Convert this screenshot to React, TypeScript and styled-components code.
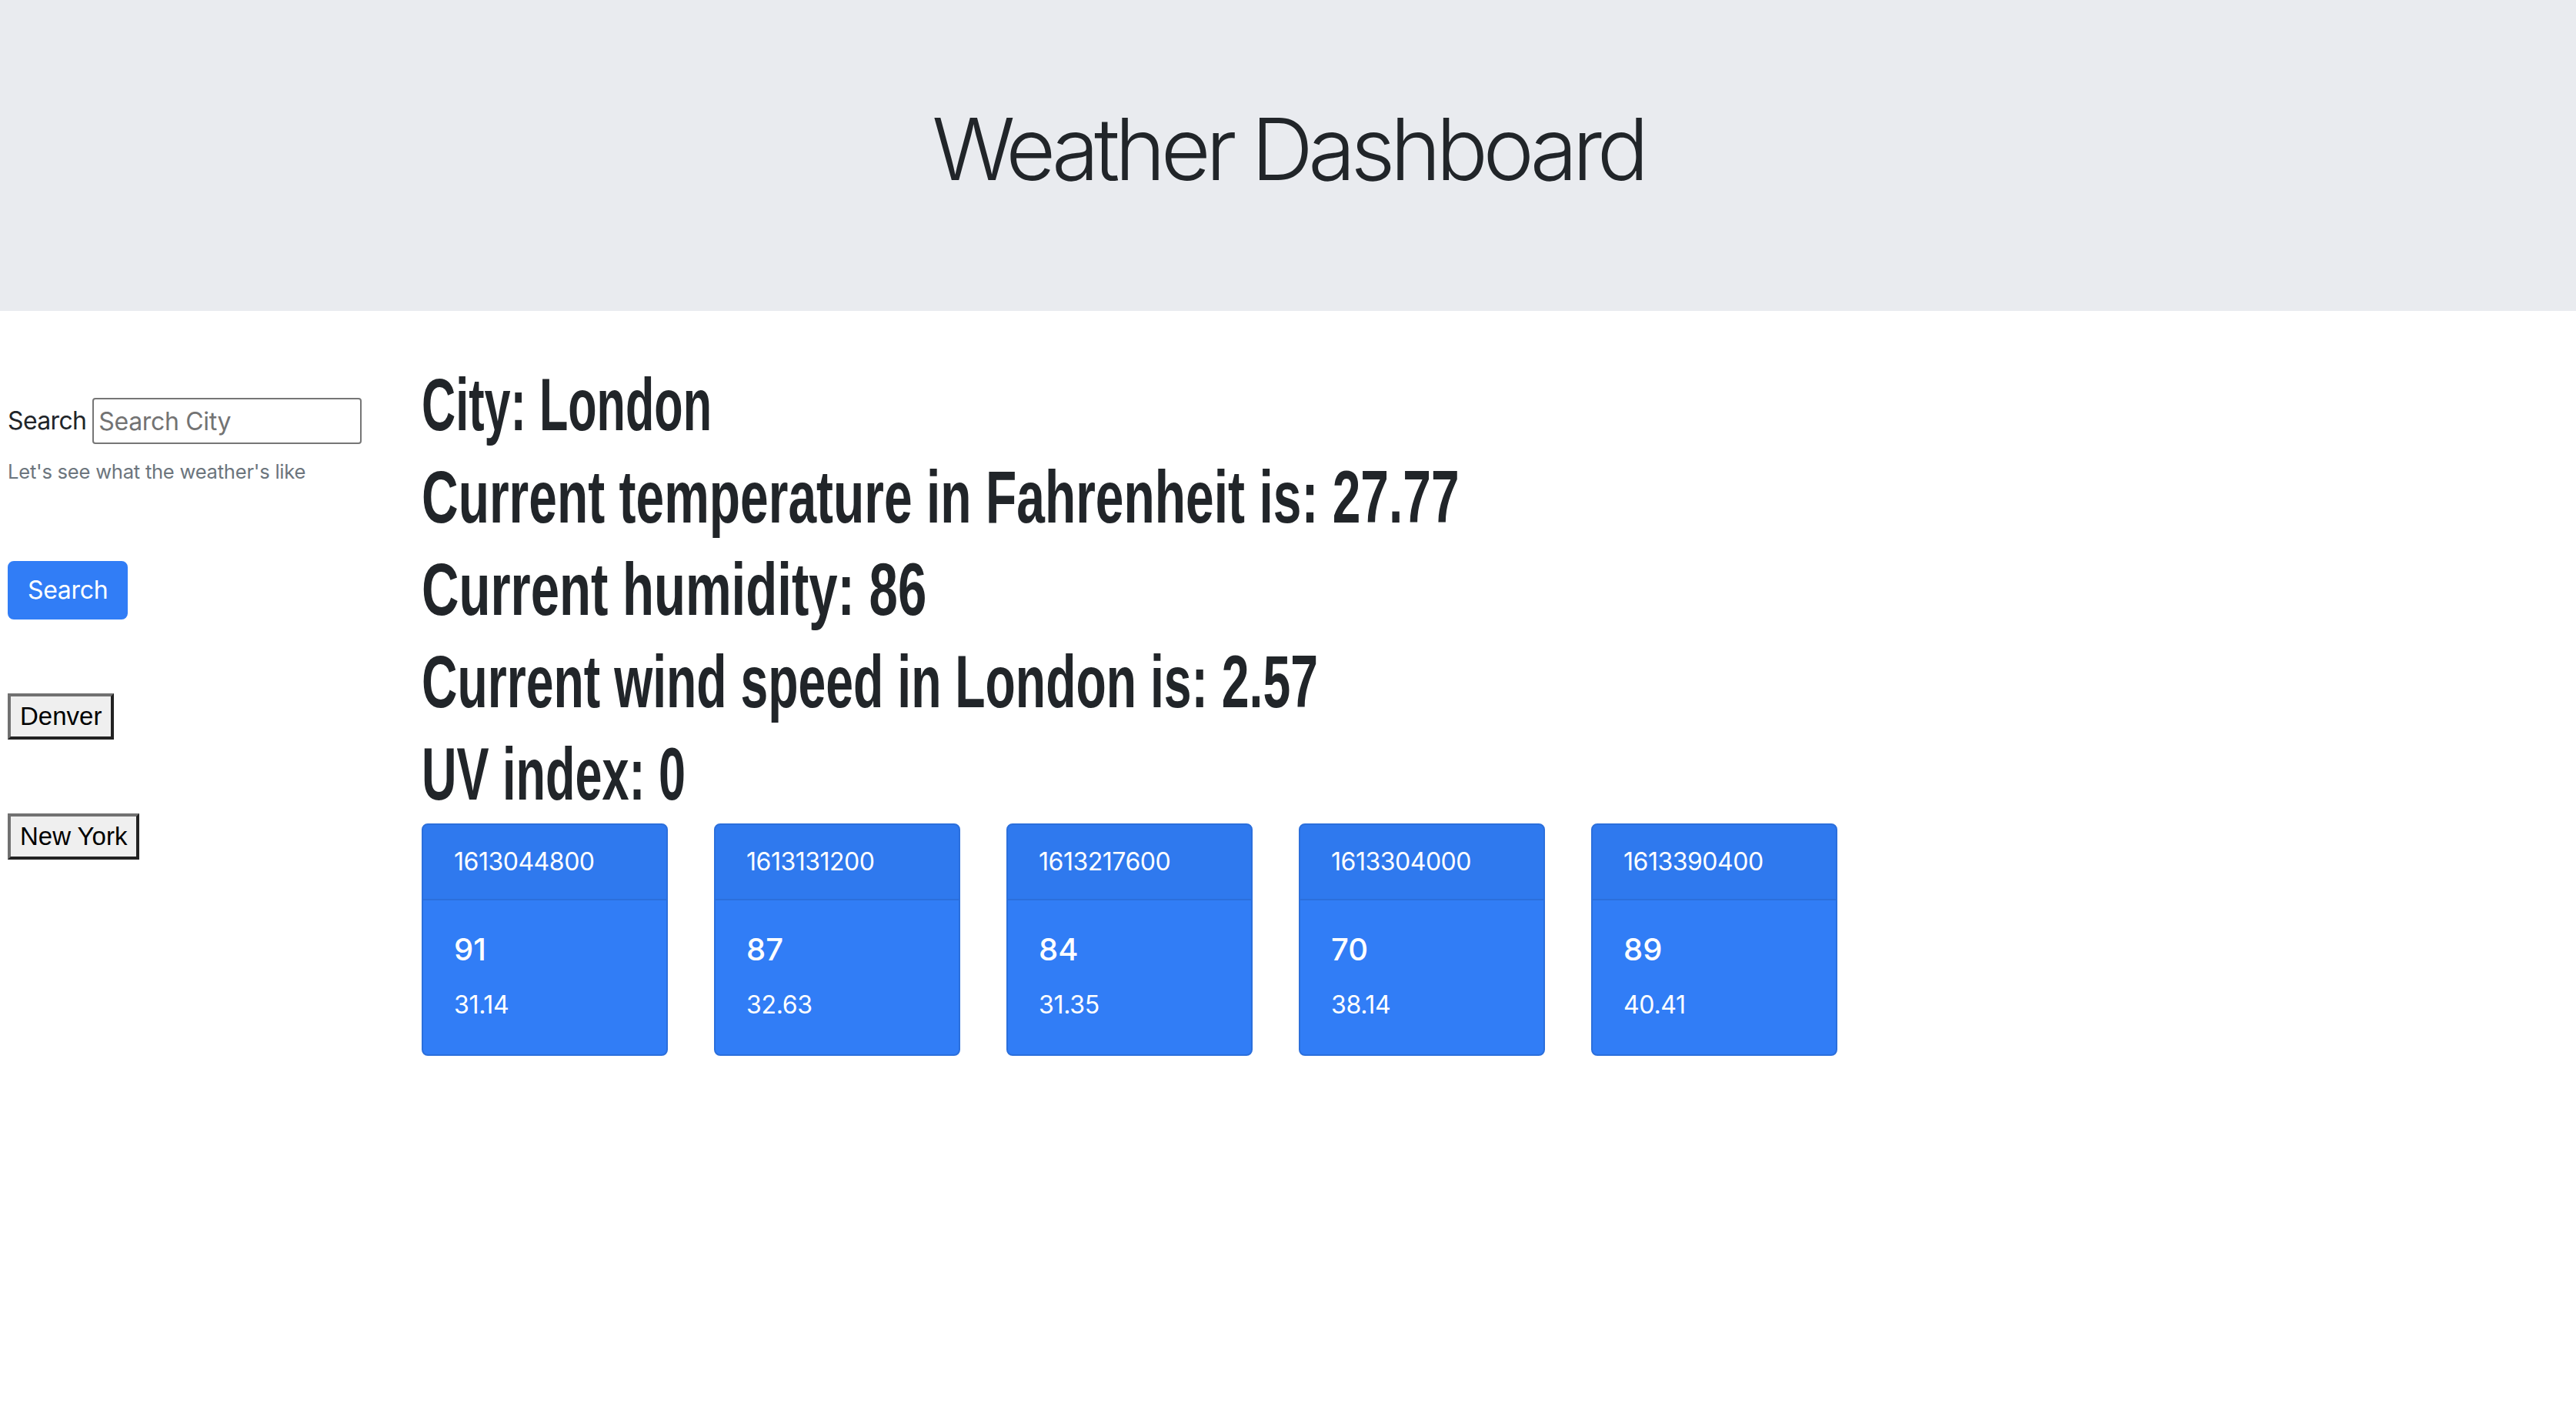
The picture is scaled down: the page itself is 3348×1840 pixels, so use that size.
import React from "react";
import styled, { createGlobalStyle } from "styled-components";

const GlobalStyle = createGlobalStyle`
  html, body {
    margin: 0;
    padding: 0;
    background: #ffffff;
  }
  body {
    font-family: Inter, "Noto Sans", "Liberation Sans", sans-serif;
    color: #212529;
    font-size: 32px;
    line-height: 1.5;
  }
  * { box-sizing: border-box; }
`;

const Page = styled.div`
  width: 100%;
  min-height: 1840px;
`;

const Jumbotron = styled.header`
  background: #e9ebef;
  padding: 126px 0 144px;
  text-align: center;
`;

const Title = styled.h1`
  margin: 0;
  font-family: Inter, "Liberation Sans", sans-serif;
  font-weight: 300;
  font-size: 112px;
  line-height: 134px;
  letter-spacing: -0.057em;
  color: #212529;
`;

const Layout = styled.div`
  display: grid;
  grid-template-columns: 548px 1fr;
`;

const Sidebar = styled.aside`
  display: flex;
  flex-direction: column;
  align-items: flex-start;
  padding: 113px 0 0 10px;
`;

const SearchRow = styled.div`
  display: flex;
  align-items: center;
  gap: 8px;
`;

const Label = styled.label`
  font-size: 32px;
  line-height: 48px;
  letter-spacing: -0.02em;
  color: #212529;
`;

const CityInput = styled.input`
  width: 350px;
  height: 60px;
  border: 2px solid #767676;
  border-radius: 4px;
  padding: 0 6px;
  font-family: Inter, "Liberation Sans", sans-serif;
  font-size: 32px;
  line-height: 48px;
  letter-spacing: -0.01em;
  color: #212529;
  background: #fff;
  &::placeholder {
    color: #737373;
  }
`;

const HelpText = styled.small`
  display: block;
  margin-top: 17px;
  font-size: 25.6px;
  line-height: 38.4px;
  letter-spacing: -0.01em;
  color: #6c757d;
`;

const PrimaryButton = styled.button`
  margin-top: 97px;
  background: #317df6;
  border: 2px solid #317df6;
  border-radius: 8px;
  color: #ffffff;
  font-family: Inter, "Liberation Sans", sans-serif;
  font-size: 32px;
  line-height: 48px;
  letter-spacing: -0.01em;
  padding: 12px 24px;
  cursor: pointer;
`;

const CityButton = styled.button`
  margin-top: 96px;
  background: #efefef;
  border-style: solid;
  border-width: 4px;
  border-color: #717171 #222222 #222222 #717171;
  border-radius: 0;
  color: #000;
  font-family: "Liberation Sans", Arial, sans-serif;
  font-size: 33px;
  line-height: 48px;
  padding: 2px 12px;
  cursor: pointer;
`;

const Main = styled.main`
  padding-top: 62px;
  display: flex;
  flex-direction: column;
  align-items: flex-start;
`;

const Heading = styled.h2<{ $stretch: number }>`
  margin: 0;
  font-family: "Liberation Sans", Arial, sans-serif;
  font-weight: 700;
  font-size: 96px;
  line-height: 120px;
  color: #212529;
  white-space: nowrap;
  transform: scaleX(${(p) => p.$stretch});
  transform-origin: left center;
`;

const CardRow = styled.div`
  display: flex;
  gap: 60px;
  margin-top: 4px;
`;

const Card = styled.div`
  width: 320px;
  background: #317df6;
  border: 2px solid #2b6fdc;
  border-radius: 8px;
  color: #ffffff;
  overflow: hidden;
`;

const CardHeader = styled.div`
  padding: 24px 40px;
  font-size: 32px;
  line-height: 48px;
  letter-spacing: -0.015em;
  background: rgba(0, 0, 0, 0.03);
  border-bottom: 2px solid #2b6fdc;
`;

const CardBody = styled.div`
  padding: 40px;
`;

const CardTitle = styled.h5`
  margin: 0 0 24px;
  font-size: 40px;
  line-height: 48px;
  font-weight: 500;
`;

const CardText = styled.p`
  margin: 0;
  font-size: 32px;
  line-height: 48px;
  letter-spacing: -0.01em;
`;

const forecast = [
  { dt: "1613044800", humidity: "91", temp: "31.14" },
  { dt: "1613131200", humidity: "87", temp: "32.63" },
  { dt: "1613217600", humidity: "84", temp: "31.35" },
  { dt: "1613304000", humidity: "70", temp: "38.14" },
  { dt: "1613390400", humidity: "89", temp: "40.41" },
];

const headings = [
  { text: "City: London", stretch: 0.637 },
  { text: "Current temperature in Fahrenheit is: 27.77", stretch: 0.687 },
  { text: "Current humidity: 86", stretch: 0.699 },
  { text: "Current wind speed in London is: 2.57", stretch: 0.67 },
  { text: "UV index: 0", stretch: 0.656 },
];

export default function App() {
  return (
    <Page>
      <GlobalStyle />
      <Jumbotron>
        <Title>Weather Dashboard</Title>
      </Jumbotron>
      <Layout>
        <Sidebar>
          <SearchRow>
            <Label htmlFor="city">Search</Label>
            <CityInput id="city" type="text" placeholder="Search City" />
          </SearchRow>
          <HelpText>Let's see what the weather's like</HelpText>
          <PrimaryButton type="button">Search</PrimaryButton>
          <CityButton type="button">Denver</CityButton>
          <CityButton type="button">New York</CityButton>
        </Sidebar>
        <Main>
          {headings.map((h) => (
            <Heading key={h.text} $stretch={h.stretch}>
              {h.text}
            </Heading>
          ))}
          <CardRow>
            {forecast.map((f) => (
              <Card key={f.dt}>
                <CardHeader>{f.dt}</CardHeader>
                <CardBody>
                  <CardTitle>{f.humidity}</CardTitle>
                  <CardText>{f.temp}</CardText>
                </CardBody>
              </Card>
            ))}
          </CardRow>
        </Main>
      </Layout>
    </Page>
  );
}
